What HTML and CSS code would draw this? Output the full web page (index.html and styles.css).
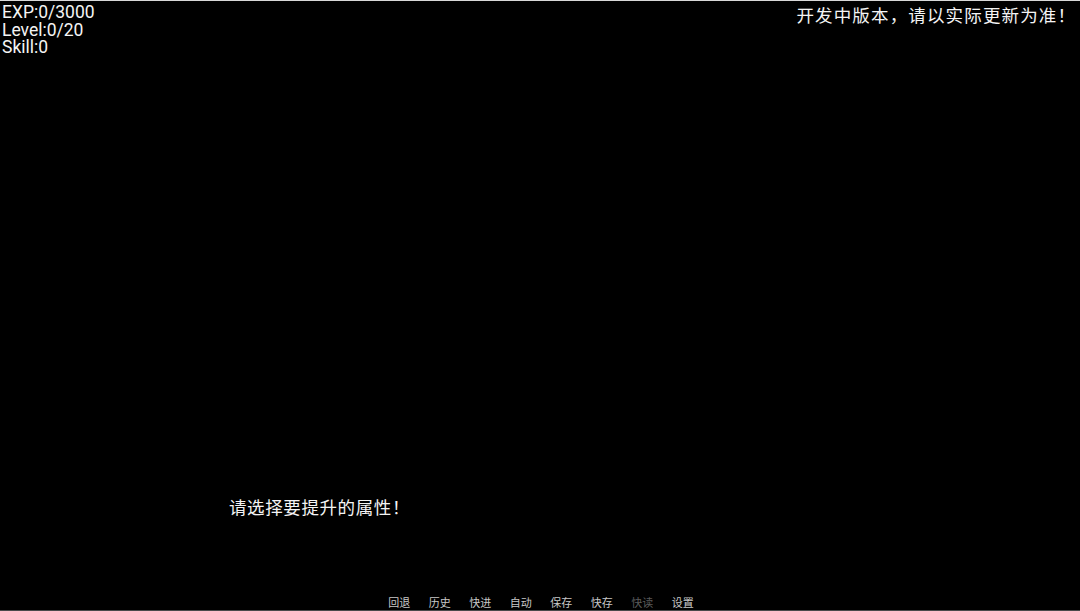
FILE: index.html
```html
<!DOCTYPE html>
<html lang="zh">
<head>
<meta charset="utf-8">
<link rel="stylesheet" href="styles.css">
</head>
<body>
<div class="screen">
  <div class="top">
    <div class="stats">
      <div>EXP:0/3000</div>
      <div>Level:0/20</div>
      <div>Skill:0</div>
    </div>
    <div class="notice">开发中版本，请以实际更新为准<span class="bang">！</span></div>
  </div>
  <div class="prompt">请选择要提升的属性<span class="bang">！</span></div>
  <nav class="menu">
    <span>回退</span>
    <span>历史</span>
    <span>快进</span>
    <span>自动</span>
    <span>保存</span>
    <span>快存</span>
    <span class="off">快读</span>
    <span>设置</span>
  </nav>
</div>
</body>
</html>
```
FILE: styles.css
```css
html, body {
  margin: 0;
  padding: 0;
  background: #000;
}
.screen {
  width: 1080px;
  height: 611px;
  box-sizing: border-box;
  border-top: 1px solid #d8d8d8;
  border-bottom: 1px solid #4a4a4a;
  background: #000;
  color: #fff;
  display: flex;
  flex-direction: column;
  font-family: "Noto Sans CJK SC", sans-serif;
  overflow: hidden;
}
.top {
  display: flex;
  justify-content: space-between;
  align-items: flex-start;
  padding: 3px 5px 0 2px;
}
.stats {
  font-family: Roboto, sans-serif;
  font-size: 17.5px;
  line-height: 17.5px;
  color: #f4f4f4;
}
.notice {
  font-size: 17.5px;
  line-height: 22px;
  color: #f4f4f4;
  letter-spacing: 1.15px;
}
.prompt {
  margin-top: auto;
  padding-left: 229px;
  font-size: 17.5px;
  line-height: 22px;
  color: #f4f4f4;
  letter-spacing: 0.6px;
}
.bang {
  display: inline-block;
  box-sizing: border-box;
  width: 1em;
  text-align: right;
  padding-right: 4px;
  letter-spacing: 0;
}
.menu {
  margin-top: 77px;
  display: flex;
  justify-content: center;
  gap: 18.5px;
  padding-left: 2px;
  font-size: 11px;
  line-height: 14px;
  color: #c8c8c8;
  height: 14px;
  margin-bottom: 1px;
}
.menu .off {
  color: #5a5a5a;
}
```
